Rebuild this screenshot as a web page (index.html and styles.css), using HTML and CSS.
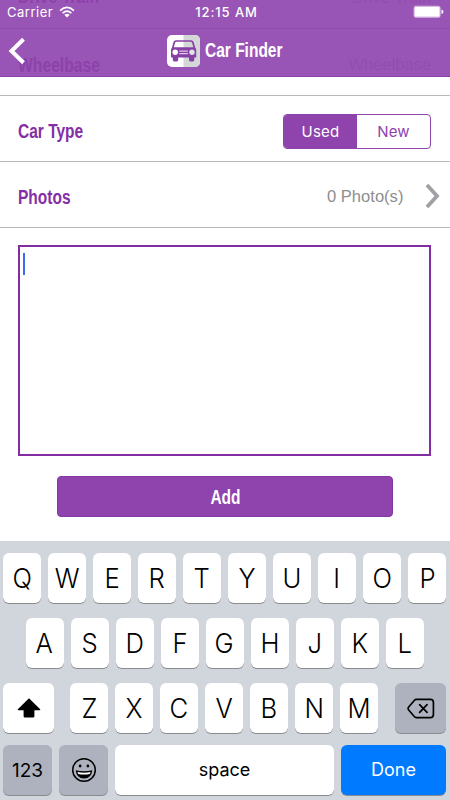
FILE: index.html
```html
<!DOCTYPE html>
<html lang="en">
<head>
<meta charset="utf-8">
<title>Car Finder</title>
<link rel="stylesheet" href="styles.css">
</head>
<body>
<div class="screen">
  <header class="header">
    <span class="ghost ghost-train">Drive Train</span>
    <span class="ghost ghost-train-value">Drive Train</span>
    <span class="ghost ghost-base">Wheelbase</span>
    <span class="ghost ghost-base-value">Wheelbase</span>
    <div class="status">
      <div class="status-side">
        <span class="carrier">Carrier</span>
        <svg class="wifi" width="16" height="12" viewBox="0 0 16 12"><g fill="none" stroke="#fff" stroke-width="1.7"><path d="M1.1 4.6Q8-1.8 14.9 4.6"/><path d="M3.6 7.2Q8 3.2 12.4 7.2"/></g><path d="M5.3 8.8Q8 6.5 10.7 8.8L8 11.5Z" fill="#fff"/></svg>
      </div>
      <span class="clock">12:15 AM</span>
      <div class="status-side right">
        <svg width="31" height="14" viewBox="0 0 31 14"><rect x=".6" y=".8" width="27" height="12" rx="2.4" fill="#d9b9e5"/><rect x="1.8" y="2" width="24.6" height="9.6" rx="1.2" fill="#fff"/><path d="M28.5 4.5Q30.4 5 30.4 6.8T28.5 9.1Z" fill="#fff"/></svg>
      </div>
    </div>
    <div class="nav">
      <svg class="back" width="18" height="28" viewBox="0 0 18 28"><path d="M15.5 2.3L3.5 14L15.5 25.7" fill="none" stroke="#fff" stroke-width="4"/></svg>
      <div class="brand">
        <svg width="33" height="32" viewBox="0 0 33 32">
          <rect width="33" height="32" rx="5" fill="#fff"/>
          <path d="M16.5 0H28a5 5 0 0 1 5 5V27a5 5 0 0 1-5 5H16.5Z" fill="#d4d7d8"/>
          <path fill="#8740a5" fill-rule="evenodd" d="M9 5.2H24Q26 5.2 26.6 7L28.2 12.4Q29.2 13.5 29.2 15V22.5H27.3V25Q27.3 26.4 25.9 26.4H23.4Q22 26.4 22 25V22.5H11.2V25Q11.2 26.4 9.8 26.4H7.2Q5.8 26.4 5.8 25V22.5H4V15Q4 13.5 5 12.4L6.5 7Q7.1 5.2 9 5.2ZM9.3 6.8Q8.4 6.8 8.1 7.7L6.8 12.2H26.4L25 7.7Q24.7 6.8 23.8 6.8Z"/>
          <circle cx="8.2" cy="17.2" r="2.7" fill="#fff"/><circle cx="25" cy="17.2" r="2.7" fill="#e0e2e3"/>
          <path d="M12.3 16.1H20.9M12.3 18.6H20.9" stroke="#dbcae2" stroke-width="1.2"/>
        </svg>
        <span class="narrow title">Car Finder</span>
      </div>
    </div>
  </header>

  <main class="form">
    <div class="row">
      <span class="narrow label">Car Type</span>
      <div class="segment"><span class="on">Used</span><span>New</span></div>
    </div>
    <div class="row">
      <span class="narrow label">Photos</span>
      <div class="photos"><span>0 Photo(s)</span>
        <svg width="15" height="26" viewBox="0 0 15 26"><path d="M2 2L12 13L2 24" fill="none" stroke="#a0a0a4" stroke-width="3.8"/></svg>
      </div>
    </div>
    <div class="note"><i class="caret"></i></div>
    <div class="add"><span class="narrow">Add</span></div>
  </main>

  <section class="keyboard">
    <div class="keys"><b><i>Q</i></b><b><i>W</i></b><b><i>E</i></b><b><i>R</i></b><b><i>T</i></b><b><i>Y</i></b><b><i>U</i></b><b><i>I</i></b><b><i>O</i></b><b><i>P</i></b></div>
    <div class="keys"><b><i>A</i></b><b><i>S</i></b><b><i>D</i></b><b><i>F</i></b><b><i>G</i></b><b><i>H</i></b><b><i>J</i></b><b><i>K</i></b><b><i>L</i></b></div>
    <div class="keys spread">
      <b class="wide"><svg width="24" height="20" viewBox="0 0 24 20"><path d="M12 .3L23.2 11.3Q23.6 12.3 22.5 12.3H17.4V18.2Q17.4 19.5 16 19.5H8Q6.6 19.5 6.6 18.2V12.3H1.5Q.4 12.3 .8 11.3Z"/></svg></b>
      <div class="keys inner"><b><i>Z</i></b><b><i>X</i></b><b><i>C</i></b><b><i>V</i></b><b><i>B</i></b><b><i>N</i></b><b><i>M</i></b></div>
      <b class="wide grey"><svg width="28" height="21" viewBox="0 0 30 22"><g fill="none" stroke="#000" stroke-width="1.8" stroke-linejoin="round" stroke-linecap="round"><path d="M10 1.3H25Q28.3 1.3 28.3 4.6V17.4Q28.3 20.7 25 20.7H10Q8.8 20.7 7.8 19.6L1.8 12.6Q.6 11 1.8 9.4L7.8 2.4Q8.8 1.3 10 1.3Z"/><path d="M13.5 6.8L21.5 15.2M21.5 6.8L13.5 15.2"/></g></svg></b>
    </div>
    <div class="keys last">
      <b class="grey num">123</b>
      <b class="grey emoji"><svg width="26" height="26" viewBox="0 0 26 26"><circle cx="13" cy="13" r="11.3" fill="none" stroke="#000" stroke-width="1.5"/><circle cx="9.1" cy="9" r="1.4"/><circle cx="16.9" cy="9" r="1.4"/><path d="M4.7 13.3Q13 15 21.3 13.3Q20.4 21.5 13 21.5T4.7 13.3Z"/><path d="M6.4 15Q13 16.3 19.6 15L18.8 17Q13 18.1 7.2 17Z" fill="#fff"/></svg></b>
      <b class="space">space</b>
      <b class="done">Done</b>
    </div>
  </section>
</div>
</body>
</html>
```
FILE: styles.css
```css
* { box-sizing: border-box; }
body { margin: 0; font-family: Inter, "Liberation Sans", sans-serif; }
.screen { width: 450px; height: 800px; overflow: hidden; background: #fff; display: flex; flex-direction: column; }
.narrow { font-family: "Liberation Sans", sans-serif; font-weight: 700; font-size: 20px; white-space: nowrap; transform: scaleX(.775); transform-origin: left center; }

.header { position: relative; height: 77px; flex: none; background: #9955b5; border-bottom: 1px solid #8c3fab; color: #fff; overflow: hidden; }
.status { position: relative; height: 29px; padding: 0 6px 4px 7px; display: flex; align-items: center; border-bottom: 1px solid #914cae; }
.status-side { flex: 1; display: flex; align-items: center; gap: 6px; }
.right { justify-content: flex-end; }
.carrier { font-size: 13px; letter-spacing: .5px; }
.clock { font-size: 13px; font-weight: 500; letter-spacing: .9px; margin-right: -2px; }
.nav { position: relative; height: 43px; display: flex; align-items: center; padding-left: 8px; }
.back { flex: none; }
.brand { display: flex; align-items: center; gap: 5px; margin-left: 141px; }
.title { line-height: 32px; margin-top: -1px; }
.ghost { position: absolute; color: #8c42aa; font: 700 20px/20px "Liberation Sans", sans-serif; transform: scaleX(.785); transform-origin: left center; }
.ghost-train { left: 18px; top: -14px; }
.ghost-base { left: 18px; top: 55px; }
.ghost-train-value, .ghost-base-value { right: 19px; color: #934db0; font: 400 17px/20px "Liberation Sans", sans-serif; transform: scaleX(.97); transform-origin: right center; }
.ghost-train-value { top: -12px; }
.ghost-base-value { top: 55px; }

.form { flex: none; height: 464px; padding-top: 18px; }
.row { height: 66px; border-top: 1px solid #b9b9b9; padding: 0 10px 0 18px; display: flex; align-items: center; justify-content: space-between; }
.row:nth-child(2) { height: 67px; border-bottom: 1px solid #b9b9b9; }
.label { color: #842fa6; padding-top: 5px; }
.segment { width: 148px; height: 35px; margin: 5px 9px 0 0; border: 1px solid #8e43ad; border-radius: 4px; display: flex; overflow: hidden; color: #8e43ad; font-size: 15px; letter-spacing: .2px; line-height: 33px; text-align: center; }
.segment span { flex: 1; }
.segment .on { background: #8e43ad; color: #fff; }
.photos { display: flex; align-items: center; gap: 22px; color: #8e8e8e; font: 17px "Liberation Sans", sans-serif; padding-top: 2px; }
.photos span { transform: scaleX(.975); transform-origin: right center; padding-top: 2px; }
.note { margin: 17px 19px 0 18px; height: 211px; border: 2px solid #842da2; padding: 6px 3px; }
.caret { display: block; width: 2px; height: 22px; background: #3c69f0; }
.add { margin: 20px 57px 0; height: 41px; border: 1px solid #8535a5; border-radius: 4px; background: #8e43ad; color: #fff; display: flex; align-items: center; justify-content: center; }
.add .narrow { transform-origin: center; padding-top: 2px; }

.keyboard { flex: 1; background: #d1d5dc; padding-top: 12px; display: flex; flex-direction: column; align-items: center; gap: 15px; }
.keys { display: flex; gap: 7px; flex: none; margin-left: -1px; }
.keys b { width: 38px; height: 50px; border-radius: 6px; background: #fff; box-shadow: 0 1px 0 #898b8f; display: flex; align-items: center; justify-content: center; font-size: 27px; font-weight: 400; color: #000; }
.keys i { font-style: normal; font-weight: 300; transform: scaleX(.95); }
.spread { width: 443px; justify-content: space-between; }
.keys .wide { width: 51px; }
.keys .grey { background: #adb2be; }
.last { width: 443px; margin-top: -3px; }
.keys .num, .keys .emoji { width: 49px; font-size: 19px; }
.keys .space { width: 219px; font-size: 18px; padding-bottom: 2px; }
.keys .done { flex: 1; font-size: 18px; padding-bottom: 2px; background: #007aff; color: #fff; }
```
